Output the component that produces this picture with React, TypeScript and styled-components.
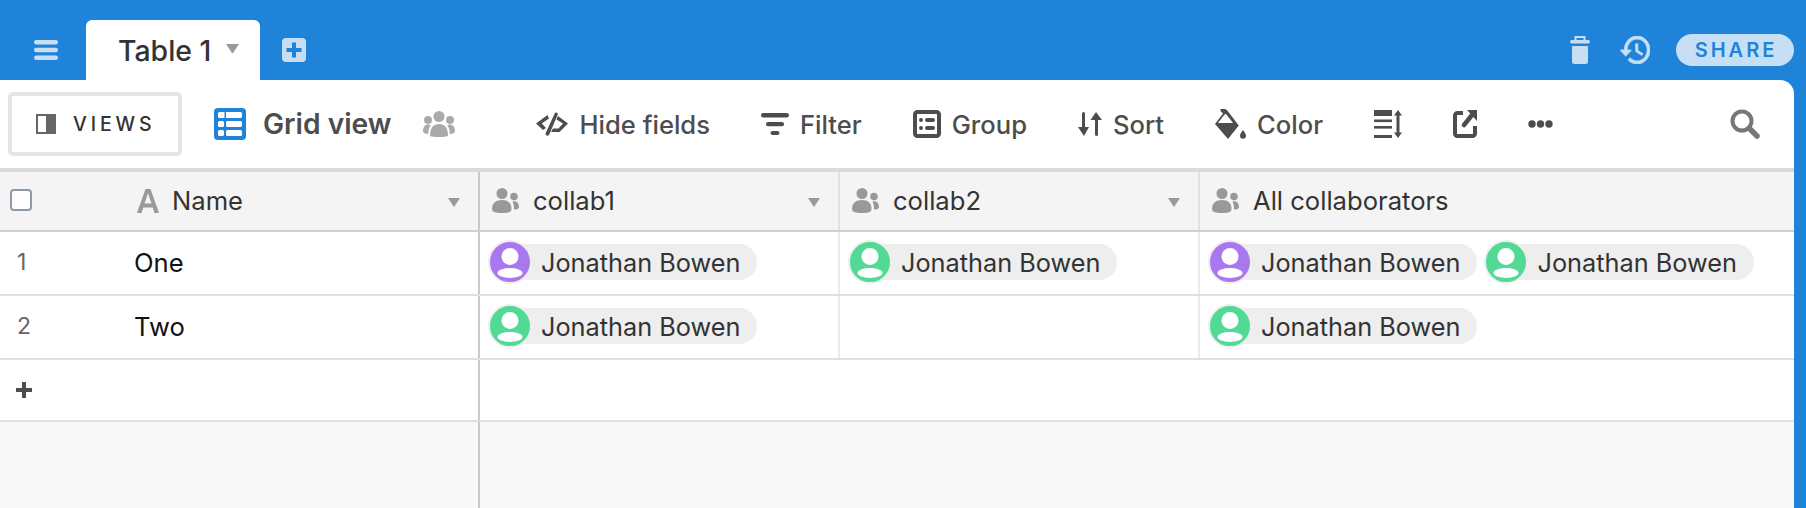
import React from "react";
import styled, { createGlobalStyle } from "styled-components";

const Global = createGlobalStyle`
  html, body { margin: 0; padding: 0; background: #1f83d9; }
  * { box-sizing: border-box; }
  body { font-family: Inter, "Liberation Sans", sans-serif; -webkit-font-smoothing: antialiased; }
`;

const Page = styled.div`
  width: 1806px; height: 508px; overflow: hidden; background: #1f83d9;
  display: flex; flex-direction: column;
`;
const TopBar = styled.header`
  height: 80px; display: flex; align-items: flex-end; padding: 0 12px 0 34px; flex: none;
`;
const TopIcon = styled.div<{ $mb: number; $ml?: number }>`
  display: flex; margin-bottom: ${p => p.$mb}px; margin-left: ${p => p.$ml ?? 0}px; flex: none;
`;
const Tab = styled.div`
  width: 174px; height: 60px; margin-left: 28px; background: #fff; border-radius: 6px 6px 0 0;
  display: flex; align-items: center; padding: 0 0 0 32px; flex: none;
  font-size: 28.4px; font-weight: 500; color: #333;
`;
const TabCaret = styled.div`
  margin-left: 15px; display: flex; margin-top: -3px;
`;
const Spacer = styled.div`flex: 1;`;
const ShareButton = styled.div`
  width: 118px; height: 32px; margin-bottom: 14px; margin-left: 26px; border-radius: 16px; background: #c7dff5; color: #1f83d9;
  display: flex; align-items: center; justify-content: center; font-size: 20px; font-weight: 600; letter-spacing: 3px; padding-left: 2px;
`;

const Main = styled.main`
  flex: 1; margin-right: 12px; background: #fff; border-top-right-radius: 14px; overflow: hidden;
  display: flex; flex-direction: column;
`;
const Toolbar = styled.div`
  height: 88px; flex: none; display: flex; align-items: center; padding: 0 34px 0 8px;
`;
const ViewsButton = styled.div`
  width: 174px; height: 64px; border: 4px solid #e5e5e5; border-radius: 5px; flex: none;
  display: flex; align-items: center; padding-left: 24px; gap: 17px;
  font-size: 19.5px; font-weight: 500; letter-spacing: 3.9px; color: #333;
`;
const ViewName = styled.div`
  display: flex; align-items: center; gap: 17px; margin-left: 32px; flex: none;
  font-size: 28.2px; font-weight: 600; color: #4d4d4d;
`;
const Tools = styled.div`
  display: flex; align-items: center; gap: 51px; margin-left: 0; flex: none;
`;
const Tool = styled.div`
  display: flex; align-items: center; gap: 11px; font-size: 25.6px; font-weight: 500; color: #4d4d4d; flex: none;
`;
const Collaborators = styled.div`
  display: flex; margin-left: 32px; margin-right: 81px; flex: none;
`;

const Row = styled.div<{ $h: number; $bg?: string; $line?: string; $pb?: number }>`
  height: ${p => p.$h}px; flex: none; background: ${p => p.$bg ?? "#fff"};
  border-bottom: 2px solid ${p => p.$line ?? "#dde1e4"};
  display: grid; grid-template-columns: 480px 360px 360px 1fr;
`;
const LeftCell = styled.div<{ $pb?: number }>`
  display: flex; align-items: center; border-right: 2px solid #c9c9c9; position: relative;
  padding-bottom: ${p => p.$pb ?? 0}px;
`;
const Cell = styled.div<{ $tail?: boolean; $pb?: number }>`
  display: flex; align-items: center; gap: 9px; padding-left: 10px; padding-bottom: ${p => p.$pb ?? 0}px;
  border-right: ${p => (p.$tail ? "none" : "2px solid #e9ebed")};
`;
const HeaderCell = styled(Cell)`
  gap: 11px; padding-left: 12px; border-right-color: ${p => (p.$tail ? "transparent" : "#dfe2e5")};
`;
const TopRule = styled.div`height: 4px; background: #dadada; flex: none;`;
const HeaderText = styled.span`
  font-size: 25.6px; font-weight: 400; color: #333; margin-left: 3px;
`;
const Caret = styled.div`
  margin-left: auto; margin-right: 18px; margin-top: 3px; display: flex;
`;
const Check = styled.div`
  width: 22px; height: 22px; border: 2px solid #8d9aa6; border-radius: 4px; background: #fff; margin-left: 10px; margin-top: -1px; flex: none;
`;
const NameHead = styled.div`
  display: flex; align-items: center; gap: 13px; margin-left: 105px; font-size: 25.6px; color: #333; flex: none;
`;
const RowNumber = styled.span`
  width: 134px; padding-left: 17px; font-size: 23px; color: #666; flex: none;
`;
const RowName = styled.span`
  font-size: 25.6px; color: #111;
`;
const AddMark = styled.div`
  margin-left: 16px; display: flex;
`;
const Pill = styled.div`
  height: 36px; display: flex; align-items: center; background: #eee; border-radius: 18px; padding-right: 17px; flex: none; font-size: 25.3px; color: #333;
`;
const AvatarRing = styled.div<{ $color: string }>`
  width: 44px; height: 44px; border-radius: 50%; border: 2px solid #eee; background: ${p => p.$color}; margin: 0 9px 0 -2px; overflow: hidden; flex: none; display: flex;
`;
const Footer = styled.div`
  flex: 1; background: #f8f8f8; display: flex;
`;
const FooterLeft = styled.div`width: 480px; border-right: 2px solid #c9c9c9;`;

const B = "#1f83d9", L = "#c7dff5", D = "#4d4d4d", G = "#999";

const Menu = () => (
  <svg width="24" height="20" viewBox="0 0 24 20" fill={L}>
    <rect y="0" width="24" height="4.4" rx="2.2" /><rect y="7.8" width="24" height="4.4" rx="2.2" /><rect y="15.6" width="24" height="4.4" rx="2.2" />
  </svg>
);
const PlusBox = () => (
  <svg width="24" height="24" viewBox="0 0 24 24">
    <rect width="24" height="24" rx="4" fill={L} />
    <path d="M12 4.5v15M4.5 12h15" stroke={B} strokeWidth="4" />
  </svg>
);
const Down = ({ c = G, w = 12 }: { c?: string; w?: number }) => (
  <svg width={w} height={w * 0.75} viewBox="0 0 12 9"><path d="M0 0h12L6 9z" fill={c} /></svg>
);
const Trash = () => (
  <svg width="20" height="28" viewBox="0 0 20 28" fill={L}>
    <path d="M4.5 4V0h11v4h-2V2h-7v2z" />
    <rect y="4" width="20" height="3.4" rx="1.7" />
    <path d="M2 10h16v15.5a2.5 2.5 0 0 1-2.5 2.5h-11A2.5 2.5 0 0 1 2 25.500z" />
  </svg>
);
const History = () => (
  <svg width="30" height="28" viewBox="1 3 21 18" preserveAspectRatio="none" fill={L} stroke={L} strokeWidth="0.5">
    <path d="M13 3c-4.970 0-9 4.030-9 9H1l3.890 3.890.07.14L9 12H6c0-3.870 3.130-7 7-7s7 3.130 7 7-3.130 7-7 7c-1.930 0-3.680-.79-4.940-2.060l-1.420 1.420C8.270 19.990 10.510 21 13 21c4.970 0 9-4.030 9-9s-4.030-9-9-9zm-1 5v5l4.280 2.540.72-1.210-3.500-2.080V8H12z" />
  </svg>
);
const ViewsIcon = () => (
  <svg width="20" height="20" viewBox="0 0 20 20">
    <rect x="1" y="1" width="18" height="18" fill="#fff" stroke="#666" strokeWidth="2" />
    <rect x="10" y="0" width="10" height="20" fill="#666" />
  </svg>
);
const GridIcon = () => (
  <svg width="32" height="32" viewBox="0 0 32 32">
    <rect width="32" height="32" rx="4" fill={B} />
    <g fill="#fff">
      <rect x="4" y="4" width="24" height="6" rx="1.500" fill="#fff" />
      <rect x="4" y="13" width="6" height="6" rx="1.500" /><rect x="12" y="13" width="16" height="6" rx="1.500" />
      <rect x="4" y="22" width="6" height="6" rx="1.500" /><rect x="12" y="22" width="16" height="6" rx="1.500" />
    </g>
    <rect x="10.500" y="4" width="1.500" height="6" fill={B} />
  </svg>
);
const Team = () => (
  <svg width="32" height="26" viewBox="0 0 32 26" fill="#aaa">
    <circle cx="16" cy="5.500" r="5.500" /><circle cx="5" cy="9" r="4" /><circle cx="27" cy="9" r="4" />
    <path d="M7 25c0-8 3-12 9-12s9 4 9 12c-4 1.300-14 1.300-18 0z" />
    <path d="M0 20c0-4 2-6.500 5-6.500 1.200 0 2 .3 2.800.8C6 16.500 5.300 19.500 5.200 23 2.500 22.800 0 22 0 20zM32 20c0-4-2-6.500-5-6.500-1.200 0-2 .3-2.800.8 1.800 2.200 2.500 5.200 2.600 8.700 2.700-.2 5.200-1 5.200-3z" />
  </svg>
);
const HideIcon = () => (
  <svg width="32" height="24" viewBox="0 0 32 24" fill={D}>
    <path d="M11.500 3 0 11.500 7 18l3-2-4.200-4.500L13 6.500z" />
    <path d="M19 0.800a2 2 0 0 1 3 1.200L13 23a2 2 0 0 1-3.500-1.500z" />
    <path d="M22 4 32 11.500 23.500 20H15l2-3.500h5.500l4.500-5-6.500-4z" />
  </svg>
);
const FilterIcon = () => (
  <svg width="28" height="22" viewBox="0 0 28 22" fill={D}>
    <rect width="28" height="4.500" rx="2.200" /><rect x="5" y="9" width="18" height="4.300" rx="2.100" /><rect x="9.500" y="18" width="9" height="4" rx="2" />
  </svg>
);
const GroupIcon = () => (
  <svg width="28" height="28" viewBox="0 0 28 28" fill="none">
    <rect x="2" y="2" width="24" height="24" rx="2.500" stroke={D} strokeWidth="4" />
    <g fill={D}><circle cx="8" cy="10" r="2" /><circle cx="8" cy="18" r="2" /><rect x="12" y="8" width="10" height="4" rx="2" /><rect x="12" y="16" width="10" height="4" rx="2" /></g>
  </svg>
);
const SortIcon = () => (
  <svg width="24" height="24" viewBox="0 0 24 24" fill={D}>
    <path d="M4 1.500a1.500 1.500 0 0 1 3 0V15h4l-5 9-6-9h4zM17 8h-4.500L18 0l6 8h-4v14.500a1.500 1.500 0 0 1-3 0z" />
  </svg>
);
const ColorIcon = () => (
  <svg width="31" height="30" viewBox="0 0 31 30" fill={D}>
    <path d="M5.500 0h4.800l2 1.500 11.500 15L13 30 0 15 8 4.500 5.500 2z" />
    <path d="M3 14 9.500 5.500 11 5l7 9z" fill="#fff" />
    <path d="M28 21c1.800 2.700 3 4.200 3 5.700a3 3 0 0 1-6 0c0-1.500 1.200-3 3-5.700z" />
  </svg>
);
const RowHeightIcon = () => (
  <svg width="28" height="28" viewBox="0 0 28 28" fill={D}>
    <rect width="18" height="6" /><rect y="9.500" width="18" height="2.600" /><rect y="16" width="18" height="2.600" /><rect y="25" width="18" height="3" />
    <path d="M24 0l4 5.500h-2.500v17H28L24 28l-4-5.500h2.500v-17H20z" />
  </svg>
);
const ShareIcon = () => (
  <svg width="24" height="28" viewBox="0 0 24 28" fill="none">
    <path d="M10 3H4.500A2.500 2.500 0 0 0 2 5.500v18A2.500 2.500 0 0 0 4.500 26h15a2.500 2.500 0 0 0 2.500-2.500V16" stroke={D} strokeWidth="4" />
    <path d="M11 15 19 5" stroke={D} strokeWidth="4.500" strokeLinecap="round" />
    <path d="M14 0h10v11z" fill={D} />
  </svg>
);
const More = () => (
  <svg width="25" height="8" viewBox="0 0 25 8" fill={D}><circle cx="4" cy="4" r="3.700" /><circle cx="12.500" cy="4" r="3.700" /><circle cx="21" cy="4" r="3.700" /></svg>
);
const Search = () => (
  <svg width="30" height="30" viewBox="0 0 30 30" fill="none" stroke="#777" strokeLinecap="round">
    <circle cx="12" cy="12" r="9.500" strokeWidth="4" /><path d="M19.500 19.500 27 27" strokeWidth="5.500" />
  </svg>
);
const TextField = () => (
  <svg width="22" height="24" viewBox="0 0 22 24" fill="#999"><path d="M8.500 0h5L22 24h-4.500l-1.700-5.500H6.200L4.500 24H0zm-1 14.500h7L11 4z" /></svg>
);
const PeopleField = () => (
  <svg width="27" height="25" viewBox="0 0 27 25" fill={G}>
    <circle cx="10" cy="5.500" r="5.500" />
    <path d="M0 21c0-6 4-9 10-9s9.500 3 9.500 9c0 3-3 4-9.500 4S0 24 0 21z" />
    <circle cx="22" cy="8.500" r="3.800" />
    <path d="M20.500 13.500c4-1 6.500 1.500 6.500 5.500 0 2-2 2.500-5 2.500 0-3-.2-5.500-1.500-8z" />
  </svg>
);
const Plus = () => (
  <svg width="16" height="16" viewBox="0 0 16 16"><path d="M8 0v16M0 8h16" stroke={D} strokeWidth="4" /></svg>
);
const Person = () => (
  <svg width="40" height="40" viewBox="0 0 40 40" fill="#fff">
    <circle cx="20" cy="14.500" r="8.500" />
    <ellipse cx="20" cy="31" rx="12.500" ry="5" />
  </svg>
);

const PURPLE = "#aa78ee", GREEN = "#52da95";
const Collab = ({ color }: { color: string }) => (
  <Pill><AvatarRing $color={color}><Person /></AvatarRing>Jonathan Bowen</Pill>
);
const Head = ({ label, caret = true }: { label: string; caret?: boolean }) => (
  <HeaderCell $tail={!caret} $pb={1}>
    <PeopleField /><HeaderText>{label}</HeaderText>
    {caret && <Caret><Down /></Caret>}
  </HeaderCell>
);

export default function App() {
  return (
    <Page>
      <Global />
      <TopBar>
        <TopIcon $mb={20}><Menu /></TopIcon>
        <Tab>Table 1<TabCaret><Down c="#999" w={13} /></TabCaret></Tab>
        <TopIcon $mb={18} $ml={22}><PlusBox /></TopIcon>
        <Spacer />
        <TopIcon $mb={16}><Trash /></TopIcon>
        <TopIcon $mb={16} $ml={30}><History /></TopIcon>
        <ShareButton>SHARE</ShareButton>
      </TopBar>
      <Main>
        <Toolbar>
          <ViewsButton><ViewsIcon />VIEWS</ViewsButton>
          <ViewName><GridIcon />Grid view</ViewName>
          <Collaborators><Team /></Collaborators>
          <Tools>
            <Tool><HideIcon />Hide fields</Tool>
            <Tool><FilterIcon />Filter</Tool>
            <Tool><GroupIcon />Group</Tool>
            <Tool><SortIcon />Sort</Tool>
            <Tool><ColorIcon />Color</Tool>
            <RowHeightIcon />
            <ShareIcon />
            <More />
          </Tools>
          <Spacer />
          <Search />
        </Toolbar>
        <TopRule />
        <Row $h={60} $bg="#f4f4f4" $line="#d0d0d0">
          <LeftCell $pb={1}>
            <Check />
            <NameHead><TextField />Name</NameHead>
            <Caret><Down /></Caret>
          </LeftCell>
          <Head label="collab1" />
          <Head label="collab2" />
          <Head label="All collaborators" caret={false} />
        </Row>
        <Row $h={64}>
          <LeftCell $pb={2}><RowNumber>1</RowNumber><RowName>One</RowName></LeftCell>
          <Cell $pb={2}><Collab color={PURPLE} /></Cell>
          <Cell $pb={2}><Collab color={GREEN} /></Cell>
          <Cell $tail $pb={2}><Collab color={PURPLE} /><Collab color={GREEN} /></Cell>
        </Row>
        <Row $h={64}>
          <LeftCell $pb={2}><RowNumber>2</RowNumber><RowName>Two</RowName></LeftCell>
          <Cell $pb={2}><Collab color={GREEN} /></Cell>
          <Cell />
          <Cell $tail $pb={2}><Collab color={GREEN} /></Cell>
        </Row>
        <Row $h={62}>
          <LeftCell><AddMark><Plus /></AddMark></LeftCell>
        </Row>
        <Footer><FooterLeft /></Footer>
      </Main>
    </Page>
  );
}
